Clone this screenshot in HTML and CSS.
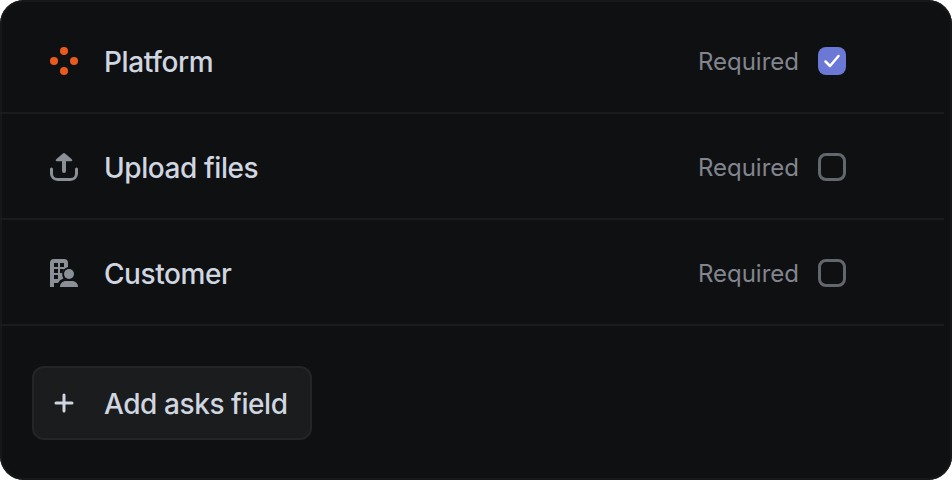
FILE: index.html
```
<!DOCTYPE html>
<html lang="en">
	<head>
		<meta charset="UTF-8" />
		<meta name="viewport" content="width=device-width, initial-scale=1.0" />
		<title>Asks fields</title>
		<link rel="stylesheet" href="styles.css">
	</head>
	<body>
		<div class="card">
			<ul class="fields">
				<li>
					<svg class="icon platform" viewBox="0 0 28 28">
						<circle cx="14" cy="4" r="4" />
						<circle cx="4" cy="14" r="4" />
						<circle cx="24" cy="14" r="4" />
						<circle cx="14" cy="24" r="4" />
					</svg>
					<span class="name">Platform</span>
					<label class="required"><span class="text">Required</span> <input type="checkbox" hidden checked />
						<span class="checkbox checked">
							<svg viewBox="0 0 28 28"><path d="M7.5 14.5L12 19L20.5 9" /></svg>
						</span>
					</label>
				</li>
				<li>
					<svg class="icon" viewBox="0 0 28 28">
						<path class="line" d="M1.5 16V20.5C1.5 24 4 26.5 7.5 26.5H20.5C24 26.5 26.5 24 26.5 20.5V16" />
						<path class="line shaft" d="M14 18V6" />
						<path d="M12.9 .5Q14-.5 15.1 .5L21.8 6.2C22.8 7.1 22.4 8.2 21.2 8.2H6.8C5.6 8.2 5.2 7.1 6.2 6.2Z" />
					</svg>
					<span class="name">Upload files</span>
					<label class="required"><span class="text">Required</span> <input type="checkbox" hidden />
						<span class="checkbox"></span>
					</label>
				</li>
				<li>
					<svg class="icon" viewBox="0 0 28 28">
						<path fill-rule="evenodd" d="M4 0H14Q18 0 18 4V8Q13 9.4 12.2 14.6Q12 17.2 13.4 19.4Q9.5 20.8 8 24H4V28H0V4Q0 0 4 0ZM4 4V8H8V4ZM10 4V8H14V4ZM4 10V14H8V10ZM10 10V14H12.2Q12.6 11.8 14 10ZM4 16V20H8V16Z" />
						<circle cx="19" cy="15" r="5" />
						<path d="M10 28C10 24.5 12.5 22 16 22H22C25.5 22 28 24.5 28 28Z" />
					</svg>
					<span class="name">Customer</span>
					<label class="required"><span class="text">Required</span> <input type="checkbox" hidden />
						<span class="checkbox"></span>
					</label>
				</li>
			</ul>
			<button class="add" type="button">
				<svg class="icon plus" viewBox="0 0 28 28">
					<path class="line" d="M14 6V22M6 14H22" />
				</svg>
				<span class="name">Add asks field</span>
			</button>
		</div>
	</body>
</html>
```

FILE: styles.css
```
* {
	margin: 0;
	padding: 0;
	box-sizing: border-box;
}

body {
	background-color: #fff;
	font-family: Inter, "Liberation Sans", sans-serif;
}

.card {
	width: 952px;
	height: 480px;
	padding-top: 8px;
	border-radius: 24px;
	background-color: #0f1012;
	box-shadow: inset 0 0 0 2px #17181a;
	overflow: hidden;
}

.fields {
	width: 944px;
	list-style: none;
}

.fields li {
	display: flex;
	align-items: center;
	height: 106px;
	padding: 2px 98px 0 50px;
	border-bottom: 2px solid #1a1b1d;
}

.icon {
	flex: none;
	width: 28px;
	height: 28px;
	margin-right: 26px;
	fill: #8a8f98;
	stroke: none;
	overflow: visible;
}

.icon .line {
	fill: none;
	stroke: #8a8f98;
	stroke-width: 3;
	stroke-linecap: round;
}

.icon .shaft {
	stroke-width: 4;
}

.platform {
	fill: #e95a1c;
}

.name {
	position: relative;
	top: 1px;
	color: #d0d6e0;
	font-size: 28px;
	font-weight: 450;
	line-height: 36px;
	letter-spacing: -0.42px;
	white-space: nowrap;
}

.required {
	display: flex;
	align-items: center;
	gap: 19px;
	margin-left: auto;
	color: #82858e;
	font-size: 24px;
	line-height: 30px;
}

.required .text {
	padding-top: 2px;
}

.checkbox {
	width: 28px;
	height: 28px;
	border: 3px solid #62666d;
	border-radius: 8px;
}

.checked {
	border: none;
	background-color: #6c78d6;
}

.checked svg {
	display: block;
	fill: none;
	stroke: #fff;
	stroke-width: 2.5;
	stroke-linecap: round;
	stroke-linejoin: round;
}

.add {
	display: flex;
	align-items: center;
	width: 280px;
	height: 74px;
	margin: 40px 0 0 32px;
	padding-left: 16px;
	border: 2px solid #242527;
	border-radius: 12px;
	background-color: #1b1c1e;
	font-family: inherit;
}

.plus .line {
	stroke: #d0d6e0;
}
```
